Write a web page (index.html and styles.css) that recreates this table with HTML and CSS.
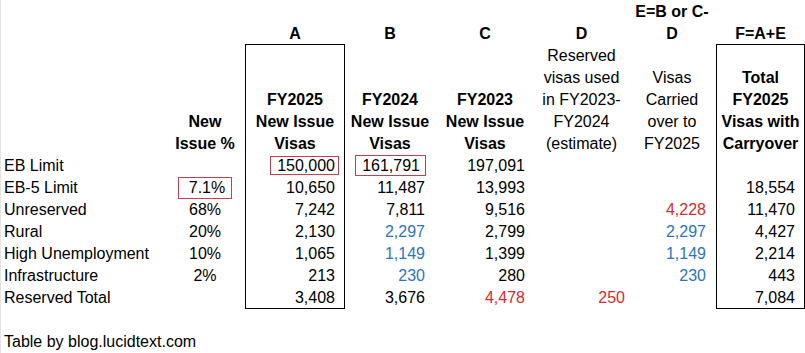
FILE: index.html
```html
<!DOCTYPE html>
<html lang="en">
<head>
    <meta charset="UTF-8">
    <meta name="viewport" content="width=device-width, initial-scale=1.0">
    <title>EB-5 Visa Carryover Table</title>
    <link rel="stylesheet" href="styles.css">
</head>
<body>

<div class="sheet">
    <div class="row letters">
        <div class="cell"></div>
        <div class="cell"></div>
        <div class="cell head">A</div>
        <div class="cell head">B</div>
        <div class="cell head">C</div>
        <div class="cell head">D</div>
        <div class="cell head">E=B or C-<br>D</div>
        <div class="cell head">F=A+E</div>
    </div>

    <div class="row titles">
        <div class="cell"></div>
        <div class="cell head">New<br>Issue %</div>
        <div class="cell head box box-top">FY2025<br>New Issue<br>Visas</div>
        <div class="cell head">FY2024<br>New Issue<br>Visas</div>
        <div class="cell head">FY2023<br>New Issue<br>Visas</div>
        <div class="cell note">Reserved<br>visas used<br>in FY2023-<br>FY2024<br>(estimate)</div>
        <div class="cell note">Visas<br>Carried<br>over to<br>FY2025</div>
        <div class="cell head box box-top">Total<br>FY2025<br>Visas with<br>Carryover</div>
    </div>

    <div class="row">
        <div class="cell label">EB Limit</div>
        <div class="cell pct"></div>
        <div class="cell num box"><span class="flag flag-a">150,000</span></div>
        <div class="cell num"><span class="flag flag-b">161,791</span></div>
        <div class="cell num">197,091</div>
        <div class="cell num d"></div>
        <div class="cell num"></div>
        <div class="cell num box"></div>
    </div>
    <div class="row">
        <div class="cell label">EB-5 Limit</div>
        <div class="cell pct"><span class="flag flag-pct">7.1%</span></div>
        <div class="cell num box">10,650</div>
        <div class="cell num">11,487</div>
        <div class="cell num">13,993</div>
        <div class="cell num d"></div>
        <div class="cell num"></div>
        <div class="cell num box">18,554</div>
    </div>
    <div class="row">
        <div class="cell label">Unreserved</div>
        <div class="cell pct">68%</div>
        <div class="cell num box">7,242</div>
        <div class="cell num">7,811</div>
        <div class="cell num">9,516</div>
        <div class="cell num d"></div>
        <div class="cell num red">4,228</div>
        <div class="cell num box">11,470</div>
    </div>
    <div class="row">
        <div class="cell label">Rural</div>
        <div class="cell pct">20%</div>
        <div class="cell num box">2,130</div>
        <div class="cell num blue">2,297</div>
        <div class="cell num">2,799</div>
        <div class="cell num d"></div>
        <div class="cell num blue">2,297</div>
        <div class="cell num box">4,427</div>
    </div>
    <div class="row">
        <div class="cell label">High Unemployment</div>
        <div class="cell pct">10%</div>
        <div class="cell num box">1,065</div>
        <div class="cell num blue">1,149</div>
        <div class="cell num">1,399</div>
        <div class="cell num d"></div>
        <div class="cell num blue">1,149</div>
        <div class="cell num box">2,214</div>
    </div>
    <div class="row">
        <div class="cell label">Infrastructure</div>
        <div class="cell pct">2%</div>
        <div class="cell num box">213</div>
        <div class="cell num blue">230</div>
        <div class="cell num">280</div>
        <div class="cell num d"></div>
        <div class="cell num blue">230</div>
        <div class="cell num box">443</div>
    </div>
    <div class="row last">
        <div class="cell label">Reserved Total</div>
        <div class="cell pct"></div>
        <div class="cell num box box-bottom">3,408</div>
        <div class="cell num">3,676</div>
        <div class="cell num red">4,478</div>
        <div class="cell num d red">250</div>
        <div class="cell num"></div>
        <div class="cell num box box-bottom">7,084</div>
    </div>

    <p class="credit">Table by blog.lucidtext.com</p>
</div>

</body>
</html>
```

FILE: styles.css
```css
body {
    font-family: Arial, "Liberation Sans", sans-serif;
    font-size: 16px;
    color: #000;
    background-color: #fff;
    margin: 0;
    overflow: hidden;
}
.sheet {
    padding-top: 1px;
    border-left: 1px solid #e4e4e4;
}
.row {
    display: grid;
    grid-template-columns: 164px 80px 100px 90px 100px 93px 88px 89px;
    line-height: 22px;
    height: 22px;
}
.row.letters {
    height: 43px;
}
.row.titles {
    height: 111px;
}
.cell {
    box-sizing: border-box;
    white-space: nowrap;
}
.letters .cell, .titles .cell {
    display: flex;
    flex-direction: column;
    justify-content: flex-end;
    text-align: center;
}
.head {
    font-weight: bold;
}
.note {
    font-weight: normal;
}
.label {
    padding-left: 3px;
}
.pct {
    text-align: center;
}
.num {
    text-align: right;
    padding-right: 10px;
}
.num.d {
    padding-right: 3px;
}
.num.box {
    padding-right: 9px;
}
.box {
    border-left: 1px solid #000;
    border-right: 1px solid #000;
}
.box-top {
    border-top: 1px solid #000;
}
.box-bottom {
    border-bottom: 1px solid #000;
    line-height: 21px;
}
.red {
    color: #d62b2b;
}
.blue {
    color: #2e75b6;
}
.flag {
    display: inline-block;
    border: 1px solid #c0404f;
}
.flag-a {
    line-height: 17px;
    padding: 0 3px 0 6px;
    margin-right: -4px;
}
.flag-b {
    line-height: 19px;
    padding: 0 5px 0 6px;
    margin-right: -1px;
}
.flag-pct {
    line-height: 20px;
    padding: 0 6px 0 10px;
}
.credit {
    margin: 22px 0 0 0;
    padding-left: 3px;
    line-height: 22px;
}
```
